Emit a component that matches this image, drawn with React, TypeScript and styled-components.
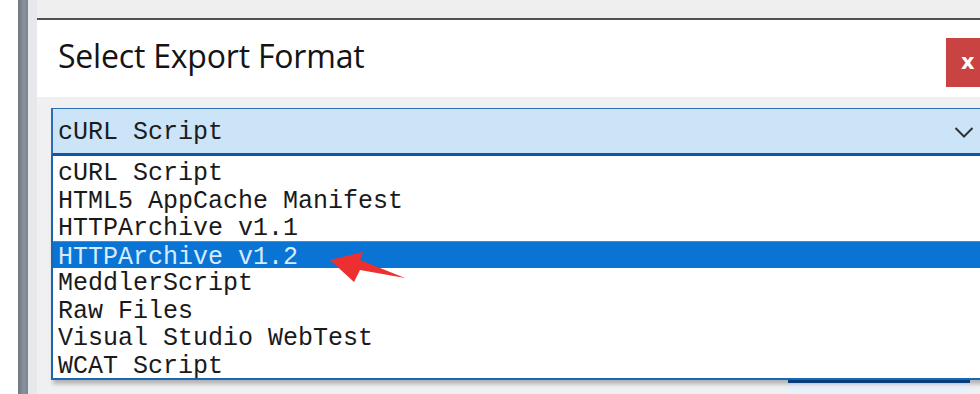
import styled, { createGlobalStyle } from "styled-components";

const GlobalStyle = createGlobalStyle`
  html, body {
    margin: 0;
    padding: 0;
    background: #ffffff;
  }
  #root {
    width: 980px;
    height: 394px;
    overflow: hidden;
  }
`;

const Screen = styled.div`
  display: flex;
  flex-direction: row;
  width: 980px;
  height: 394px;
  overflow: hidden;
  background: #ffffff;
`;

const LeftMargin = styled.div`
  width: 18px;
  flex: none;
  background: #ffffff;
`;

const SideBar = styled.div`
  width: 10px;
  flex: none;
  background: linear-gradient(90deg, #6f7882 0%, #8a939d 60%, #7b838d 100%);
`;

const Gutter = styled.div`
  width: 9px;
  flex: none;
  background: #e7e8eb;
`;

const Main = styled.div`
  flex: 1;
  display: flex;
  flex-direction: column;
  min-width: 0;
`;

const TopStrip = styled.div`
  height: 18px;
  flex: none;
  background: #efefef;
  border-bottom: 2px solid #4e5257;
`;

const Dialog = styled.div`
  flex: 1;
  display: flex;
  flex-direction: column;
  background: #ffffff;
`;

const Header = styled.div`
  height: 77px;
  flex: none;
  display: flex;
  flex-direction: row;
  align-items: flex-start;
  justify-content: space-between;
  background: #ffffff;
`;

const Title = styled.h1`
  margin: 0;
  padding: 16px 0 0 21px;
  font-family: "Open Sans", "Noto Sans", sans-serif;
  font-weight: 400;
  font-size: 32px;
  line-height: 40px;
  letter-spacing: -0.2px;
  color: #141414;
`;

const CloseButton = styled.button`
  margin-top: 18px;
  width: 44px;
  height: 49px;
  margin-right: -10px;
  border: 0;
  padding: 0 0 0 15px;
  background: #c94343;
  color: #ffffff;
  font-family: "DejaVu Sans", sans-serif;
  font-weight: 700;
  font-size: 21px;
  line-height: 47px;
  text-align: left;
`;

const Body = styled.div`
  flex: 1;
  display: flex;
  flex-direction: column;
  background: #f0f0f3;
  padding: 11px 0 0 14px;
`;

const SelectWrap = styled.div`
  position: relative;
`;

const SelectBox = styled.div`
  margin-right: -40px;
  display: flex;
  align-items: center;
  justify-content: space-between;
  background: #cce4f7;
  border: 1px solid #2c6db3;
  border-left-width: 2px;
  border-bottom: 3px solid #0c5aa6;
  padding: 3px 42px 0 5px;
  box-sizing: border-box;
  height: 48px;
  font-family: "Liberation Mono", "Courier New", monospace;
  font-size: 25px;
  color: #1c1c1c;
`;

const Chevron = styled.svg`
  width: 20px;
  height: 13px;
  margin-right: 3px;
`;

const Popup = styled.ul`
  position: absolute;
  top: 100%;
  left: 0;
  right: -40px;
  margin: 0;
  padding: 2px 0 0;
  list-style: none;
  background: #ffffff;
  border-left: 2px solid #1b66b3;
  border-bottom: 2px solid #1b66b3;
  box-shadow: 2px 4px 4px rgba(0, 0, 0, 0.25);
  z-index: 2;
`;

const Item = styled.li<{ $active?: boolean }>`
  height: 27.5px;
  line-height: 27.5px;
  padding: 2px 0 0 5px;
  font-family: "Liberation Mono", "Courier New", monospace;
  font-size: 25px;
  white-space: pre;
  color: ${(p) => (p.$active ? "#d6ebff" : "#1a1a1a")};
  background: ${(p) => (p.$active ? "#0a74d4" : "transparent")};
  border-top: ${(p) => (p.$active ? "1px solid #3f8fd6" : "0")};
  box-sizing: border-box;
`;

const Pointer = styled.svg`
  position: absolute;
  left: 270px;
  top: 92px;
  width: 90px;
  height: 40px;
  z-index: 3;
`;

const ButtonRow = styled.div`
  display: flex;
  justify-content: flex-end;
  padding-top: 224px;
  padding-right: 10px;
`;

const HiddenButton = styled.div`
  width: 182px;
  height: 30px;
  border-top: 3px solid #0b4f9c;
  background: #e8f1fb;
`;

const formats = [
  "cURL Script",
  "HTML5 AppCache Manifest",
  "HTTPArchive v1.1",
  "HTTPArchive v1.2",
  "MeddlerScript",
  "Raw Files",
  "Visual Studio WebTest",
  "WCAT Script",
];

export default function App() {
  return (
    <>
      <GlobalStyle />
      <Screen>
        <LeftMargin />
        <SideBar />
        <Gutter />
        <Main>
          <TopStrip />
          <Dialog>
            <Header>
              <Title>Select Export Format</Title>
              <CloseButton>x</CloseButton>
            </Header>
            <Body>
              <SelectWrap>
                <SelectBox>
                  <span>cURL Script</span>
                  <Chevron viewBox="0 0 20 13">
                    <path d="M1.5 2 L10 10.5 L18.5 2" fill="none" stroke="#2f3338" strokeWidth="2" />
                  </Chevron>
                </SelectBox>
                <Popup>
                  {formats.map((f, i) => (
                    <Item key={f} $active={i === 3}>
                      {f}
                    </Item>
                  ))}
                  <Pointer viewBox="0 0 90 40">
                    <path
                      d="M7 12 L40 4 L37 12 L82 30 L37 22 L31 34 Z"
                      fill="#ee2f2f"
                    />
                  </Pointer>
                </Popup>
              </SelectWrap>
              <ButtonRow>
                <HiddenButton />
              </ButtonRow>
            </Body>
          </Dialog>
        </Main>
      </Screen>
    </>
  );
}
